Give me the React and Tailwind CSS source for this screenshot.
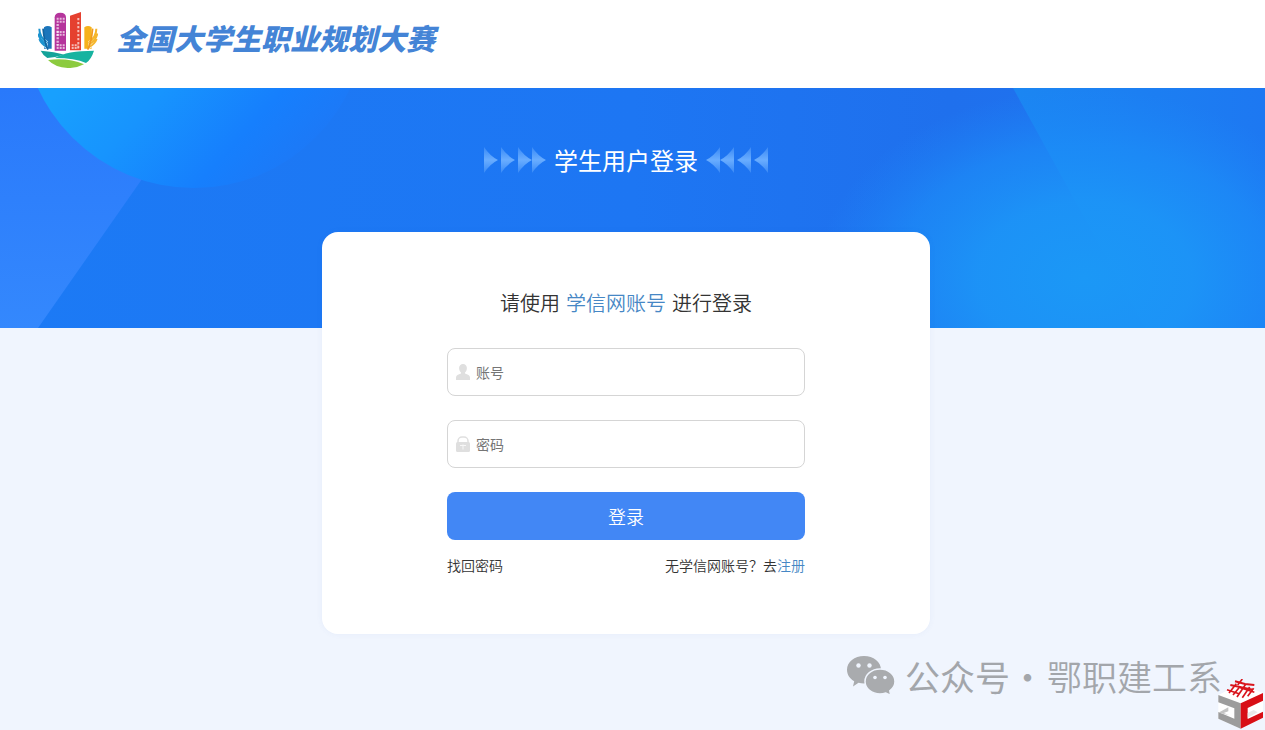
import React from "react";

function Emblem() {
  return (
    <svg viewBox="54 36 180 168" className="w-15 h-14 shrink-0" aria-hidden="true">
      <path d="M72 82q11-8 23 0v64H72z" fill="#1b75bb" />
      <path d="M104 52q0-14 17-14t17 14v100h-34z" fill="#b5359c" />
      <path d="M150 47l33-11v115h-33z" fill="#e5402f" />
      <path d="M193 82q11-8 22 0v64h-22z" fill="#f6b21b" />
      <path
        d="M59 88q0 24 22 40M55 101q3 21 27 34M57 117q6 16 25 25"
        stroke="#fff"
        strokeWidth="9"
        fill="none"
      />
      <path
        d="M58 86q0 24 22 40M55 100q3 21 26 34M58 117q6 16 24 25"
        stroke="#1c93cf"
        strokeWidth="6"
        fill="none"
      />
      <path d="M69 86q4 42 15 63" stroke="#12639f" strokeWidth="5" fill="none" />
      <path
        d="M229 88q0 24-22 40M233 101q-3 21-27 34M230 117q-6 16-24 25"
        stroke="#fff"
        strokeWidth="9"
        fill="none"
      />
      <path
        d="M229 86q0 24-22 40M232 100q-3 21-26 34M230 117q-6 16-24 25"
        stroke="#f5b62c"
        strokeWidth="6"
        fill="none"
      />
      <path d="M218 86q-4 42-15 63" stroke="#ef9a1f" strokeWidth="5" fill="none" />
      <g stroke="#fff" strokeOpacity=".65" fill="none">
        <path
          d="M110 56h24M110 65h24M110 96h24M110 104h24M110 136h24M110 144h24"
          strokeWidth="6"
          strokeDasharray="6 3"
        />
        <path d="M113 72v64" strokeWidth="7" strokeDasharray="6 4" />
        <path d="M175 54v92" strokeWidth="6" strokeDasharray="7 5" />
        <path d="M155 136h20M155 144h20" strokeWidth="6" strokeDasharray="6 3" />
      </g>
      <path d="M62 152q44 3 70 12-26 8-50 10-13-8-20-22z" fill="#14a39a" />
      <path d="M105 174q35-22 117-22-8 26-24 37-33-15-93-15z" fill="#17b3a0" />
      <path d="M84 180q60-8 108 13-22 12-49 11-38-2-59-24z" fill="#8ccb3f" />
    </svg>
  );
}

function BannerArt() {
  return (
    <svg
      viewBox="0 0 1265 240"
      preserveAspectRatio="none"
      className="absolute inset-0 w-full h-full"
      aria-hidden="true"
    >
      <defs>
        <linearGradient id="base" x1="0" x2="1" y1="0" y2="0">
          <stop offset="0" stopColor="#1c7af5" />
          <stop offset=".5" stopColor="#1d76f3" />
          <stop offset=".75" stopColor="#1f70ed" />
          <stop offset="1" stopColor="#1f74f0" />
        </linearGradient>
        <linearGradient id="slope" x1="0" x2="0" y1="0" y2="1">
          <stop offset="0" stopColor="#2979fb" />
          <stop offset="1" stopColor="#3488fd" />
        </linearGradient>
        <linearGradient id="disc" gradientUnits="userSpaceOnUse" x1="60" y1="0" x2="225" y2="150">
          <stop offset="0" stopColor="#18a0fe" />
          <stop offset=".35" stopColor="#1794fe" />
          <stop offset=".75" stopColor="#167ffd" />
          <stop offset="1" stopColor="#1c79f7" />
        </linearGradient>
        <linearGradient id="wedge" x1="0" x2="1" y1="0" y2="0">
          <stop offset="0" stopColor="#1b86f2" />
          <stop offset="1" stopColor="#1d78f2" />
        </linearGradient>
        <radialGradient id="glow">
          <stop offset="0" stopColor="#1b98f6" />
          <stop offset=".4" stopColor="#1c95f7" stopOpacity=".92" />
          <stop offset=".7" stopColor="#1c8ef8" stopOpacity=".65" />
          <stop offset="1" stopColor="#1c86f8" stopOpacity="0" />
        </radialGradient>
      </defs>
      <rect width="1265" height="240" fill="url(#base)" />
      <path d="M0 0h200v8L38 240H0z" fill="url(#slope)" />
      <circle cx="194" cy="-72" r="172" fill="url(#disc)" />
      <path d="M1013 0h252v240h-120z" fill="url(#wedge)" />
      <ellipse cx="1085" cy="190" rx="270" ry="190" fill="url(#glow)" />
    </svg>
  );
}

function Arrows({ className }) {
  return (
    <svg viewBox="0 0 62 26" className={`w-[62px] h-[26px] ${className}`} aria-hidden="true">
      <defs>
        <linearGradient id="arrow" x1="0" x2="0" y1="0" y2="1">
          <stop offset="0" stopColor="#69adff" stopOpacity=".35" />
          <stop offset=".5" stopColor="#69adff" />
          <stop offset="1" stopColor="#69adff" stopOpacity=".35" />
        </linearGradient>
      </defs>
      {[0, 17, 34, 48].map((x) => (
        <path
          key={x}
          transform={`translate(${x} 0)`}
          d="M0 0q6 9 14 13-8 4-14 13z"
          fill="url(#arrow)"
        />
      ))}
    </svg>
  );
}

function UserIcon() {
  return (
    <svg viewBox="0 0 14 16" className="w-3.5 h-4" fill="#dfdfdf" aria-hidden="true">
      <path d="M7 0c2.400 0 3.900 1.700 3.900 4 0 2-.9 3.500-1.900 4.500v1c2.700.8 5 1.700 5 4V16H0v-2.500c0-2.300 2.300-3.200 5-4v-1C4 7.500 3.100 6 3.100 4 3.100 1.700 4.600 0 7 0z" />
    </svg>
  );
}

function LockIcon() {
  return (
    <svg viewBox="0 0 14 16" className="w-3.5 h-4" aria-hidden="true">
      <path
        d="M2 8V5a4 4 0 0 1 4-4h2a4 4 0 0 1 4 4v3"
        fill="none"
        stroke="#dfdfdf"
        strokeWidth="1.500"
      />
      <rect y="6" width="14" height="10" rx="1.500" fill="#dfdfdf" />
      <path d="M7 8.500v5M4 9.500h6" stroke="#f7f7f7" strokeWidth="1" />
    </svg>
  );
}

function Field({ id, type, label, icon }) {
  return (
    <div className="flex items-center gap-1.5 h-12 px-2 border border-[#d5d5d5] rounded-lg">
      <label htmlFor={id} className="shrink-0">
        {icon}
      </label>
      <input
        id={id}
        type={type}
        placeholder={label}
        aria-label={label}
        className="flex-1 min-w-0 h-full bg-transparent outline-none text-sm text-[#333] placeholder:text-[#757575]"
      />
    </div>
  );
}

function WechatIcon() {
  return (
    <svg viewBox="0 0 48 40" className="w-12 h-10 mr-2.5" aria-hidden="true">
      <path
        d="M17 0c9.500 0 17 6 17 13.800S26.500 27.500 17 27.500c-2 0-3.800-.2-5.500-.8L6 30.500l1.200-5.300C2.800 22.700 0 18.800 0 13.800 0 6 7.500 0 17 0z"
        fill="#a9abae"
      />
      <path
        d="M33 13c8.300 0 15 5.500 15 12.500 0 3.800-2 7-5.200 9.300l1 4.700-5-2.500c-1.800.6-3.700.9-5.800.9-8.300 0-15-5.500-15-12.400S24.700 13 33 13z"
        fill="#a9abae"
        stroke="#f0f5fe"
        strokeWidth="1.500"
      />
      <g fill="#f0f5fe">
        <circle cx="11.500" cy="9.500" r="2.200" />
        <circle cx="22.500" cy="9.500" r="2.200" />
        <circle cx="28" cy="21.500" r="1.800" />
        <circle cx="38" cy="21.500" r="1.800" />
      </g>
    </svg>
  );
}

function CubeLogo() {
  return (
    <svg viewBox="9 6 138 150" className="w-[46px] h-[50px]" aria-hidden="true">
      <path d="M10 54l65-32 69 26v74l-67 33-67-30z" fill="#fff" />
      <path d="M10 54l67 25v76l-67-30v-20l48 20V94L10 76z" fill="#9c9c9c" />
      <path d="M10 107l30-16v12l-14 5 16 6z" fill="#c4c4c4" />
      <path d="M77 79l67-31v23L98 93v33l46-22v18l-67 33z" fill="#d80f16" />
      <path d="M98 108l18-9 12 7-30 16z" fill="#e9e9e9" />
      <g stroke="#d9141c" strokeWidth="5" fill="none">
        <path d="M60 13l30 8 28 3M46 24l68 14" strokeWidth="6" />
        <path d="M36 38l36 12M76 32l42 14" />
        <path d="M82 6L68 24M64 20L42 48M76 28L54 54M92 22L66 60M104 30L82 62M116 34L98 58" />
      </g>
    </svg>
  );
}

export default function App() {
  return (
    <div className="relative min-h-screen bg-[#f0f5fe] text-[#333] font-['Noto_Sans_CJK_SC',sans-serif]">
      <header className="flex items-center gap-4.5 h-22 pl-[38px] pb-2 bg-white">
        <Emblem />
        <h1 className="pb-1.5 text-[29px] leading-10 font-black italic whitespace-nowrap text-[#4484d6]">
          全国大学生职业规划大赛
        </h1>
      </header>

      <section className="relative h-60 pr-[13px] overflow-hidden">
        <BannerArt />
        <div className="relative flex justify-center items-center gap-2 pt-14">
          <Arrows className="" />
          <h2 className="text-2xl leading-8 text-white">学生用户登录</h2>
          <Arrows className="-scale-x-100" />
        </div>
      </section>

      <main className="relative -mt-24 pr-[13px]">
        <div className="w-full max-w-[608px] mx-auto pt-14 pb-[59px] bg-white rounded-2xl shadow-[0_0_6px_rgba(60,110,190,0.06)]">
          <form
            className="flex flex-col w-full max-w-[358px] mx-auto"
            onSubmit={(e) => e.preventDefault()}
          >
            <p className="mb-[30px] text-xl leading-[30px] text-center font-[350]">
              请使用<span className="mx-1.5 text-[#4687c5]">学信网账号</span>进行登录
            </p>
            <div className="flex flex-col gap-6">
              <Field id="account" type="text" label="账号" icon={<UserIcon />} />
              <Field id="password" type="password" label="密码" icon={<LockIcon />} />
              <button
                type="submit"
                className="h-12 rounded-lg bg-[#4287f5] text-lg text-white font-[350]"
              >
                登录
              </button>
            </div>
            <div className="flex justify-between mt-[15px] text-sm leading-5 font-[350]">
              <a href="#find">找回密码</a>
              <span>
                无学信网账号？去
                <a href="#register" className="text-[#4687c5]">
                  注册
                </a>
              </span>
            </div>
          </form>
        </div>
      </main>

      <div className="absolute right-[43px] bottom-[30px] flex items-center text-[35px] leading-12 text-[#a3a6ab]">
        <WechatIcon />
        <span>公众号</span>
        <span>·</span>
        <span className="ml-0.5 font-[350]">鄂职建工系</span>
      </div>
      <div className="absolute right-px bottom-px">
        <CubeLogo />
      </div>
    </div>
  );
}
